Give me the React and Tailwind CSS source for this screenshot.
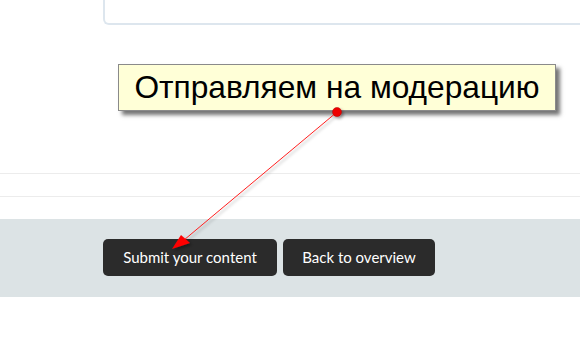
import React from "react";

function Callout() {
  return (
    <div className="absolute left-[118px] top-[64px] w-[438px] h-[47px] bg-[#ffffd7] border border-[#8a8a8a] shadow-[4px_4px_4px_rgba(0,0,0,0.55)] flex items-center justify-center">
      <span className="text-[31.7px] leading-none text-black font-['Liberation_Sans',Arial,sans-serif]">
        Отправляем на модерацию
      </span>
    </div>
  );
}

function Arrow() {
  return (
    <svg className="absolute left-0 top-0 pointer-events-none" width="580" height="337" viewBox="0 0 580 337">
      <defs>
        <filter id="sh" x="-20%" y="-20%" width="140%" height="140%">
          <feDropShadow dx="2" dy="2" stdDeviation="1.5" floodColor="#000" floodOpacity="0.35" />
        </filter>
      </defs>
      <g filter="url(#sh)">
        <line x1="337" y1="112" x2="184" y2="240" stroke="#ff2020" strokeWidth="1" />
        <polygon points="172,249 181,235 190,243" fill="#ff0000" />
        <circle cx="337" cy="112" r="4.5" fill="#ee0000" stroke="#b00000" strokeWidth="0.5" />
      </g>
    </svg>
  );
}

export default function App() {
  return (
    <div className="relative w-[580px] h-[337px] bg-white overflow-hidden font-['Lato',sans-serif]">
      <div className="ml-[103px] h-[25px] border-l-2 border-b-2 border-[#dde6ee] rounded-bl-[6px]" />
      <div className="h-[148px]" />
      <div className="border-t border-[#ececec] h-[23px]" />
      <div className="border-t border-[#ececec] h-[23px]" />
      <div className="bg-[#dce3e5] h-[78px] pt-[20px] pl-[103px] flex gap-[6px] items-start">
        <button className="h-[37px] w-[174px] rounded-[5px] bg-[#2b2b2b] text-white text-[15px]">
          Submit your content
        </button>
        <button className="h-[37px] w-[152px] rounded-[5px] bg-[#2b2b2b] text-white text-[15px]">
          Back to overview
        </button>
      </div>
      <Callout />
      <Arrow />
    </div>
  );
}
